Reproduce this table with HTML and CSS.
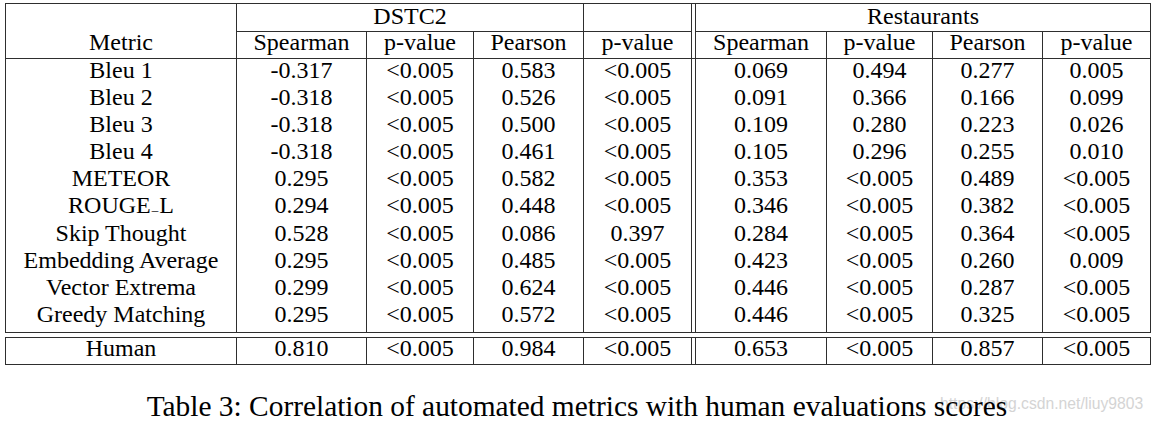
FILE: index.html
```html
<!DOCTYPE html>
<html>
<head>
<meta charset="utf-8">
<link rel="stylesheet" href="styles.css">
</head>
<body>
<div class="page">
<table class="corr">
<colgroup>
<col class="c-metric"><col class="c-sp1"><col class="c-p1"><col class="c-pe1"><col class="c-p2"><col class="c-gap"><col class="c-sp2"><col class="c-p3"><col class="c-pe2"><col class="c-p4">
</colgroup>
<thead>
<tr class="h1">
<th rowspan="2" class="metric-head">Metric</th>
<th colspan="3">DSTC2</th>
<th></th>
<th rowspan="2" class="dbl"></th>
<th colspan="4">Restaurants</th>
</tr>
<tr class="h2">
<th>Spearman</th><th>p-value</th><th>Pearson</th><th>p-value</th>
<th>Spearman</th><th>p-value</th><th>Pearson</th><th>p-value</th>
</tr>
</thead>
<tbody class="data">
<tr><td>Bleu 1</td><td>-0.317</td><td>&lt;0.005</td><td>0.583</td><td>&lt;0.005</td><td class="dbl"></td><td>0.069</td><td>0.494</td><td>0.277</td><td>0.005</td></tr>
<tr><td>Bleu 2</td><td>-0.318</td><td>&lt;0.005</td><td>0.526</td><td>&lt;0.005</td><td class="dbl"></td><td>0.091</td><td>0.366</td><td>0.166</td><td>0.099</td></tr>
<tr><td>Bleu 3</td><td>-0.318</td><td>&lt;0.005</td><td>0.500</td><td>&lt;0.005</td><td class="dbl"></td><td>0.109</td><td>0.280</td><td>0.223</td><td>0.026</td></tr>
<tr><td>Bleu 4</td><td>-0.318</td><td>&lt;0.005</td><td>0.461</td><td>&lt;0.005</td><td class="dbl"></td><td>0.105</td><td>0.296</td><td>0.255</td><td>0.010</td></tr>
<tr><td>METEOR</td><td>0.295</td><td>&lt;0.005</td><td>0.582</td><td>&lt;0.005</td><td class="dbl"></td><td>0.353</td><td>&lt;0.005</td><td>0.489</td><td>&lt;0.005</td></tr>
<tr><td>ROUGE<span class="us">_</span>L</td><td>0.294</td><td>&lt;0.005</td><td>0.448</td><td>&lt;0.005</td><td class="dbl"></td><td>0.346</td><td>&lt;0.005</td><td>0.382</td><td>&lt;0.005</td></tr>
<tr><td>Skip Thought</td><td>0.528</td><td>&lt;0.005</td><td>0.086</td><td>0.397</td><td class="dbl"></td><td>0.284</td><td>&lt;0.005</td><td>0.364</td><td>&lt;0.005</td></tr>
<tr><td>Embedding Average</td><td>0.295</td><td>&lt;0.005</td><td>0.485</td><td>&lt;0.005</td><td class="dbl"></td><td>0.423</td><td>&lt;0.005</td><td>0.260</td><td>0.009</td></tr>
<tr><td>Vector Extrema</td><td>0.299</td><td>&lt;0.005</td><td>0.624</td><td>&lt;0.005</td><td class="dbl"></td><td>0.446</td><td>&lt;0.005</td><td>0.287</td><td>&lt;0.005</td></tr>
<tr class="last"><td>Greedy Matching</td><td>0.295</td><td>&lt;0.005</td><td>0.572</td><td>&lt;0.005</td><td class="dbl"></td><td>0.446</td><td>&lt;0.005</td><td>0.325</td><td>&lt;0.005</td></tr>
</tbody>
<tbody class="human">
<tr class="gap"><td colspan="10"></td></tr>
<tr class="hrow"><td>Human</td><td>0.810</td><td>&lt;0.005</td><td>0.984</td><td>&lt;0.005</td><td class="dbl"></td><td>0.653</td><td>&lt;0.005</td><td>0.857</td><td>&lt;0.005</td></tr>
</tbody>
</table>
<p class="caption">Table 3: Correlation of automated metrics with human evaluations scores</p>
<span class="watermark">https://blog.csdn.net/liuy9803</span>
</div>
</body>
</html>
```

FILE: styles.css
```css
html, body {
  margin: 0;
  padding: 0;
  background: #ffffff;
}

.page {
  position: relative;
  width: 1154px;
  height: 421px;
  padding: 3px 0 0 5px;
  box-sizing: border-box;
  font-family: "Liberation Serif", "DejaVu Serif", serif;
  color: #000;
}

.corr {
  border-collapse: collapse;
  table-layout: fixed;
  width: 1145px;
  font-family: "Liberation Serif", "DejaVu Serif", serif;
  font-size: 24px;
}

.c-metric { width: 231px; }
.c-sp1 { width: 130px; }
.c-p1 { width: 107px; }
.c-pe1 { width: 110px; }
.c-p2 { width: 108px; }
.c-gap { width: 4px; }
.c-sp2 { width: 131px; }
.c-p3 { width: 106px; }
.c-pe2 { width: 110px; }
.c-p4 { width: 108px; }

.corr th,
.corr td {
  padding: 0;
  text-align: center;
  font-family: "Liberation Serif", "DejaVu Serif", serif;
  font-weight: normal;
  white-space: nowrap;
  overflow: visible;
  line-height: 24px;
  vertical-align: top;
}

.corr th {
  border: 1px solid #2e2e2e;
}

.corr th.metric-head {
  vertical-align: bottom;
  padding-bottom: 4px;
}

.h1 { height: 28px; }
.h2 { height: 27px; }

.h2 th {
  line-height: 20px;
}

.data td {
  border-left: 1px solid #2e2e2e;
  border-right: 1px solid #2e2e2e;
  height: 27.1px;
  line-height: 23px;
}

.data tr.last td {
  border-bottom: 1px solid #2e2e2e;
  height: 29px;
}

.gap td {
  height: 4px;
  line-height: 4px;
  border-top: 1px solid #2e2e2e;
  border-bottom: 1px solid #2e2e2e;
  border-left: none;
  border-right: none;
  padding: 0;
}

.hrow td {
  border: 1px solid #2e2e2e;
  height: 26px;
  line-height: 20px;
}

.us {
  display: inline-block;
  font-size: 13px;
  line-height: 1;
  vertical-align: 3px;
  margin: 0 1px;
}

.caption {
  position: relative;
  z-index: 1;
  margin: 25px 0 0 -5px;
  width: 1154px;
  text-align: center;
  font-size: 29.4px;
  line-height: 32px;
}

.watermark {
  position: absolute;
  left: 940px;
  top: 394px;
  z-index: 0;
  font-family: "Liberation Sans", Arial, sans-serif;
  font-size: 15.7px;
  line-height: 20px;
  color: #d4d4d4;
}
```
